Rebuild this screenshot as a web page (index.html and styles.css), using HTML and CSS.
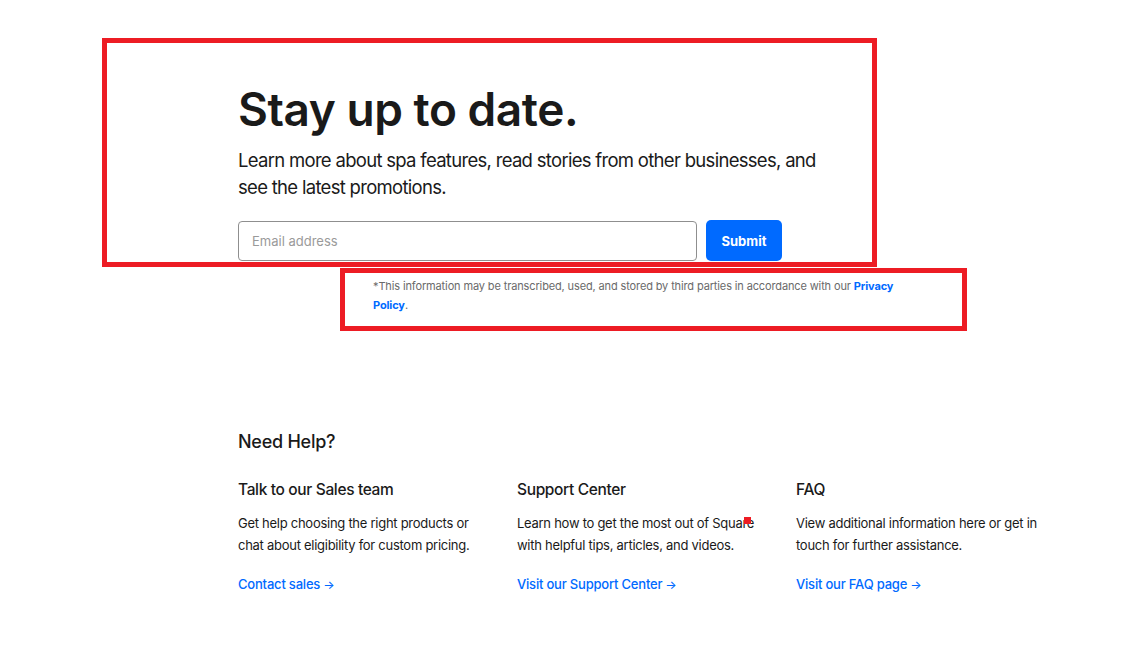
FILE: index.html
```html
<!DOCTYPE html>
<html lang="en">
<head>
<meta charset="utf-8">
<title>Stay up to date</title>
<link rel="stylesheet" href="styles.css">
</head>
<body>
<main class="page">
  <section class="newsletter">
    <h1 class="title">Stay up to date.</h1>
    <p class="lead">Learn more about spa features, read stories from other businesses, and see the latest promotions.</p>
    <form class="signup">
      <input class="email" type="email" placeholder="Email address">
      <button class="submit" type="button">Submit</button>
    </form>
    <p class="disclaimer">*This information may be transcribed, used, and stored by third parties in accordance with our <a class="policy" href="#">Privacy Policy</a>.</p>
  </section>

  <section class="help">
    <h2 class="help-title">Need Help?</h2>
    <div class="help-grid">
      <div class="help-col">
        <h3 class="col-title">Talk to our Sales team</h3>
        <p class="col-text">Get help choosing the right products or chat about eligibility for custom pricing.</p>
        <a class="col-link" href="#">Contact sales<span class="arrow">→</span></a>
      </div>
      <div class="help-col">
        <h3 class="col-title">Support Center</h3>
        <p class="col-text">Learn how to get the most out of Square with helpful tips, articles, and videos.</p>
        <a class="col-link" href="#">Visit our Support Center<span class="arrow">→</span></a>
      </div>
      <div class="help-col">
        <h3 class="col-title">FAQ</h3>
        <p class="col-text">View additional information here or get in touch for further assistance.</p>
        <a class="col-link" href="#">Visit our FAQ page<span class="arrow">→</span></a>
      </div>
    </div>
  </section>

  <div class="mark mark-main"></div>
  <div class="mark mark-note"></div>
  <div class="dot"></div>
</main>
</body>
</html>
```

FILE: styles.css
```css
html, body {
  margin: 0;
  padding: 0;
  background: #ffffff;
}

body {
  font-family: Inter, "Noto Sans", "Liberation Sans", sans-serif;
  color: #1a1a1a;
  width: 1136px;
  height: 664px;
  overflow: hidden;
}

.page {
  position: relative;
  padding-left: 238px;
  height: 664px;
  box-sizing: border-box;
}

.newsletter {
  padding-top: 81px;
}

.title {
  margin: 0;
  font-size: 46px;
  line-height: 56px;
  font-weight: 600;
  letter-spacing: -0.45px;
  color: #1a1a1a;
}

.lead {
  margin: 10px 0 0;
  width: 590px;
  font-size: 18.5px;
  line-height: 27px;
  font-weight: 400;
  letter-spacing: -0.7px;
  color: #1a1a1a;
}

.signup {
  display: flex;
  gap: 9px;
  margin-top: 19px;
}

.email {
  box-sizing: border-box;
  width: 459px;
  height: 40px;
  margin-top: 1px;
  border: 1px solid #8f8f8f;
  border-radius: 4px;
  padding: 0 13px;
  font-family: Inter, "Noto Sans", sans-serif;
  font-size: 13px;
  color: #1a1a1a;
  outline: none;
}

.email::placeholder {
  color: #9a9a9a;
}

.submit {
  box-sizing: border-box;
  width: 76px;
  height: 41px;
  border: none;
  border-radius: 5px;
  background: #006aff;
  color: #ffffff;
  font-family: Inter, "Noto Sans", sans-serif;
  font-size: 13px;
  font-weight: 700;
  cursor: pointer;
}

.disclaimer {
  margin: 16px 0 0 135px;
  width: 540px;
  font-size: 11px;
  line-height: 19px;
  letter-spacing: -0.13px;
  color: #6a6a6a;
}

.policy {
  color: #006aff;
  font-weight: 700;
  text-decoration: none;
}

.help {
  padding-top: 115px;
}

.help-title {
  margin: 0;
  font-size: 18px;
  line-height: 24px;
  font-weight: 500;
  letter-spacing: -0.25px;
  color: #1a1a1a;
}

.help-grid {
  display: grid;
  grid-template-columns: 279px 279px 279px;
  margin-top: 25px;
}

.help-col {
  display: flex;
  flex-direction: column;
  align-items: flex-start;
}

.col-title {
  margin: 0;
  font-size: 15.5px;
  line-height: 22px;
  font-weight: 500;
  letter-spacing: -0.35px;
  color: #1a1a1a;
}

.col-text {
  margin: 11px 0 0;
  width: 248px;
  font-size: 13px;
  line-height: 22px;
  letter-spacing: -0.27px;
  color: #1a1a1a;
}

.col-link {
  margin-top: 17px;
  font-size: 13px;
  line-height: 22px;
  font-weight: 500;
  letter-spacing: -0.2px;
  color: #006aff;
  text-decoration: none;
}

.arrow {
  margin-left: 3px;
  font-size: 12px;
}

.mark {
  position: absolute;
  box-sizing: border-box;
  border: 5px solid #ed1c24;
  pointer-events: none;
}

.mark-main {
  left: 102px;
  top: 38px;
  width: 775px;
  height: 229px;
}

.mark-note {
  left: 340px;
  top: 268px;
  width: 627px;
  height: 63px;
}

.dot {
  position: absolute;
  left: 744px;
  top: 517px;
  width: 7px;
  height: 7px;
  background: #ed1c24;
}
```
